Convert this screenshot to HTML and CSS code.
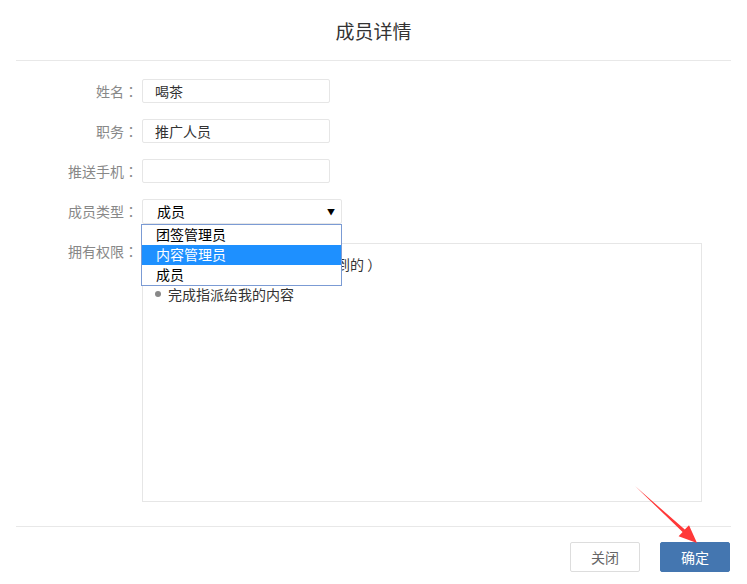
FILE: index.html
```html
<!DOCTYPE html>
<html lang="zh-CN">
<head>
    <meta charset="UTF-8">
    <meta name="viewport" content="width=device-width, initial-scale=1.0">
    <title>成员详情</title>
    <link rel="stylesheet" href="styles.css">
</head>
<body>
    <div class="dialog">
        <!-- Header -->
        <div class="dialog-header">
            <h2>成员详情</h2>
        </div>

        <!-- Form -->
        <div class="dialog-body">
            <div class="form-row">
                <label>姓名<span class="colon" lang="ja">：</span></label>
                <div class="input">喝茶</div>
            </div>
            <div class="form-row">
                <label>职务<span class="colon" lang="ja">：</span></label>
                <div class="input">推广人员</div>
            </div>
            <div class="form-row">
                <label>推送手机<span class="colon" lang="ja">：</span></label>
                <div class="input"></div>
            </div>
            <div class="form-row">
                <label>成员类型<span class="colon" lang="ja">：</span></label>
                <div class="select">
                    <span>成员</span>
                    <span class="caret">▼</span>
                    <ul class="select-options">
                        <li>团签管理员</li>
                        <li class="active">内容管理员</li>
                        <li>成员</li>
                    </ul>
                </div>
            </div>
            <div class="form-row perm-row">
                <label>拥有权限<span class="colon" lang="ja">：</span></label>
                <div class="perm-box">
                    <ul>
                        <li>查看全部内容（包括未分配到的 ）</li>
                        <li>完成指派给我的内容</li>
                    </ul>
                </div>
            </div>
        </div>

        <!-- Footer -->
        <div class="dialog-footer">
            <button class="btn">关闭</button>
            <button class="btn btn-primary">确定</button>
        </div>

        <svg class="pointer" width="747" height="584" viewBox="0 0 747 584">
            <polygon points="635,486 684.8,529.6 689,525.2 697,543 678.6,536.2 682.6,532" fill="#ff3838"/>
        </svg>
    </div>
</body>
</html>
```

FILE: styles.css
```css
body {
    font-family: "Noto Sans CJK SC", "Liberation Sans", sans-serif;
    margin: 0;
    padding: 0;
    background: #fff;
    font-size: 14px;
    color: #333;
}
.dialog {
    position: relative;
    width: 747px;
    height: 584px;
    overflow: hidden;
}
/* Header */
.dialog-header {
    height: 60px;
    margin: 0 16px;
    border-bottom: 1px solid #e8e8e8;
    text-align: center;
}
.dialog-header h2 {
    margin: 0;
    font-size: 19px;
    font-weight: normal;
    line-height: 62px;
    color: #333;
}
/* Form */
.dialog-body {
    margin: 0 16px;
    padding: 18px 0 24px;
    border-bottom: 1px solid #e8e8e8;
    display: flex;
    flex-direction: column;
    gap: 16px;
}
.form-row {
    display: flex;
    align-items: center;
    gap: 4px;
    height: 24px;
}
.form-row label {
    width: 122px;
    text-align: right;
    color: #888;
    line-height: 24px;
}
.colon {
    font-family: "Noto Sans CJK JP", sans-serif;
    display: inline-block;
    width: 14px;
    text-align: center;
}
.input {
    width: 188px;
    height: 24px;
    box-sizing: border-box;
    border: 1px solid #e6e6e6;
    border-radius: 2px;
    padding-left: 12px;
    line-height: 22px;
    color: #333;
}
.select {
    position: relative;
    width: 200px;
    height: 25px;
    box-sizing: border-box;
    border: 1px solid #e6e6e6;
    border-radius: 2px;
    padding: 0 6px 0 14px;
    line-height: 23px;
    color: #000;
    display: flex;
    justify-content: space-between;
}
.select .caret {
    font-size: 8px;
}
.select-options {
    position: absolute;
    top: 24px;
    left: -2px;
    width: 201px;
    box-sizing: border-box;
    margin: 0;
    padding: 0;
    list-style: none;
    background: #fff;
    border: 1px solid #7b9bd4;
    z-index: 2;
}
.select-options li {
    height: 20px;
    line-height: 19px;
    padding-left: 14px;
    color: #000;
}
.select-options li.active {
    background: #1e90ff;
    color: #fff;
}
.perm-row {
    align-items: flex-start;
    height: 259px;
    margin-top: 4px;
}
.perm-row label {
    line-height: 16px;
}
.perm-box {
    width: 560px;
    height: 259px;
    box-sizing: border-box;
    border: 1px solid #e6e6e6;
    padding: 5px 12px;
}
.perm-box ul {
    margin: 0;
    padding: 0;
    list-style: none;
}
.perm-box li {
    line-height: 30px;
    color: #333;
    display: flex;
    align-items: center;
}
.perm-box li::before {
    content: "";
    width: 6px;
    height: 6px;
    border-radius: 50%;
    background: #888;
    margin-right: 7px;
}
/* Footer */
.dialog-footer {
    display: flex;
    justify-content: flex-end;
    gap: 20px;
    padding: 15px 17px 0;
}
.btn {
    width: 70px;
    height: 30px;
    font-family: inherit;
    font-size: 14px;
    background: #fff;
    color: #666;
    border: 1px solid #ddd;
    border-radius: 2px;
}
.btn-primary {
    background: #4476b0;
    border-color: #4476b0;
    color: #fff;
}
.pointer {
    position: absolute;
    top: 0;
    left: 0;
    pointer-events: none;
}
```
